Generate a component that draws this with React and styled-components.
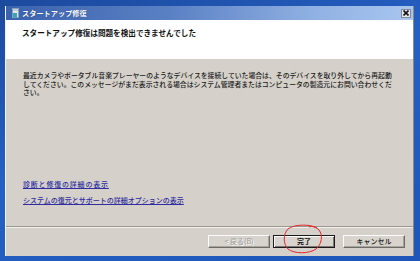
import React from 'react'
import styled, { createGlobalStyle } from 'styled-components';

const GlobalStyle = createGlobalStyle`
  html, body {
    margin: 0;
    padding: 0;
    background: #1d52b3;
  }
  * { box-sizing: border-box; }
`;

const jp = `"Noto Sans CJK JP", "Noto Sans", sans-serif`;

const Desktop = styled.div`
  width: 420px;
  height: 261px;
  padding: 6px 6px 5px 5px;
  background: linear-gradient(160deg, #1c4a9e 0%, #2560c4 45%, #1d56b8 100%);
  position: relative;
  overflow: hidden;
`;

const Window = styled.div`
  height: 100%;
  display: flex;
  flex-direction: column;
  border-left: 1px solid #f4f4f4;
  border-right: 1px solid #8a8a8a;
  background: #d5d1ca;
`;

const TitleBar = styled.div`
  height: 14px;
  display: flex;
  align-items: center;
  padding: 0 2px 0 6px;
  background: linear-gradient(90deg, #3b62ad 0%, #5a80c4 40%, #8fb0e2 75%, #a9c6ef 100%);
`;

const Title = styled.span`
  font-family: ${jp};
  font-size: 7.2px;
  font-weight: 700;
  color: #fff;
  margin-left: 3px;
  text-shadow: 0 0 1px #1c3a80;
  flex: 1;
`;

const CloseBox = styled.div`
  width: 10px;
  height: 9px;
  display: flex;
  align-items: center;
  justify-content: center;
  background: #e4e6ea;
  border: 1px solid #7d8aa0;
`;

const Header = styled.div`
  height: 39px;
  background: #fff;
  padding: 7px 0 0 16px;
`;

const Heading = styled.h1`
  margin: 0;
  font-family: ${jp};
  font-size: 7.6px;
  font-weight: 700;
  color: #111;
`;

const Body = styled.div`
  flex: 1;
  display: flex;
  flex-direction: column;
  padding-top: 12px;
`;

const Message = styled.p`
  margin: 0 0 0 17px;
  font-family: ${jp};
  font-size: 6.85px;
  font-weight: 500;
  line-height: 8.6px;
  color: #1a1a1a;
  white-space: nowrap;
`;

const Links = styled.div`
  margin-top: auto;
  padding-left: 17px;
  display: flex;
  flex-direction: column;
  gap: 6px;
`;

const Link = styled.a`
  font-family: ${jp};
  font-size: 7px;
  font-weight: 500;
  line-height: 10px;
  letter-spacing: ${p => p.$spread || 0}px;
  color: #2e2c9e;
  text-decoration: underline;
  cursor: pointer;
`;

const Separator = styled.div`
  margin-top: 21px;
  height: 2px;
  border-top: 1px solid #9a9690;
  border-bottom: 1px solid #f2f0ec;
`;

const ButtonRow = styled.div`
  display: flex;
  justify-content: flex-end;
  padding: 7px 8px 8px 0;
  position: relative;
`;

const Button = styled.button`
  width: 62px;
  height: 13px;
  margin-left: ${p => p.$gap || 0}px;
  padding: 0;
  font-family: ${jp};
  font-size: 7px;
  line-height: 1;
  font-weight: ${p => (p.$primary ? 700 : 500)};
  color: ${p => (p.disabled ? '#a6a39e' : '#111')};
  text-shadow: ${p => (p.disabled ? '1px 1px 0 #f6f6f6' : 'none')};
  background: #d8d4cd;
  border: 1px solid;
  border-color: ${p => (p.$primary ? '#1a1a1a' : '#fbfbfb #6e6b66 #6e6b66 #fbfbfb')};
  box-shadow: ${p => (p.$primary ? 'inset 1px 1px 0 #fbfbfb, inset -1px -1px 0 #7a7772' : 'inset -1px -1px 0 #a7a39d')};
`;

const Scribble = styled.svg`
  position: absolute;
  left: 276px;
  top: -4px;
  pointer-events: none;
`;

function WindowIcon() {
  return (
    <svg width="7" height="10" viewBox="0 0 7 10">
      <rect x="0.5" y="0.5" width="6" height="9" fill="#dfe6ef" stroke="#8ea0b8" />
      <rect x="1" y="5" width="4" height="4.5" fill="#2fa9b8" />
      <rect x="1" y="1.5" width="5" height="1" fill="#9fb3cc" />
    </svg>
  );
}

function CloseGlyph() {
  return (
    <svg width="6" height="6" viewBox="0 0 6 6">
      <path d="M0.5 0.5 L5.5 5.5 M5.5 0.5 L0.5 5.5" stroke="#111" strokeWidth="1.6" />
    </svg>
  );
}

export default function App() {
  return (
    <>
      <GlobalStyle />
      <Desktop>
        <Window>
          <TitleBar>
            <WindowIcon />
            <Title>スタートアップ修復</Title>
            <CloseBox><CloseGlyph /></CloseBox>
          </TitleBar>
          <Header>
            <Heading>スタートアップ修復は問題を検出できませんでした</Heading>
          </Header>
          <Body>
            <Message>
              最近カメラやポータブル音楽プレーヤーのようなデバイスを接続していた場合は、そのデバイスを取り外してから再起動<br />
              してください。このメッセージがまだ表示される場合はシステム管理者またはコンピュータの製造元にお問い合わせくだ<br />
              さい。
            </Message>
            <Links>
              <Link $spread={0.8}>診断と修復の詳細の表示</Link>
              <Link>システムの復元とサポートの詳細オプションの表示</Link>
            </Links>
            <Separator />
            <ButtonRow>
              <Button disabled>&lt; 戻る(B)</Button>
              <Button $primary $gap={3}>完了</Button>
              <Button $gap={8}>キャンセル</Button>
              <Scribble width="42" height="30" viewBox="0 0 42 30">
                <path
                  d="M35 4 C29 0 12 0 6 5 C1 10 1 20 6 25 C12 30 27 30 34 25 C40 20 41 11 37 6 C34 3 30 2 27 3"
                  fill="none"
                  stroke="#e2262b"
                  strokeWidth="1"
                />
              </Scribble>
            </ButtonRow>
          </Body>
        </Window>
      </Desktop>
    </>
  );
}
